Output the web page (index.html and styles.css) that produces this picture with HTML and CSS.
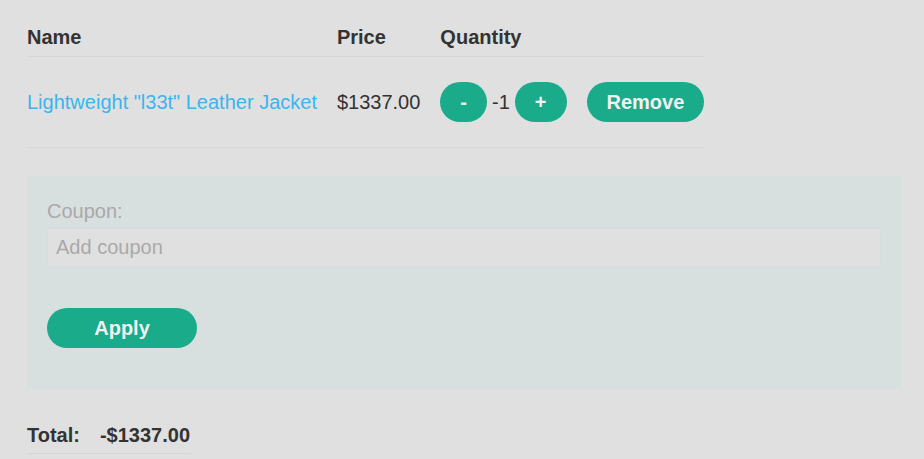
FILE: index.html
```html
<!DOCTYPE html>
<html lang="en">
<head>
<meta charset="utf-8">
<title>Cart</title>
<link rel="stylesheet" href="styles.css">
</head>
<body>
<main class="cart">
  <table class="items">
    <thead>
      <tr>
        <th>Name</th>
        <th>Price</th>
        <th>Quantity</th>
        <th></th>
      </tr>
    </thead>
    <tbody>
      <tr>
        <td><a class="product" href="#">Lightweight "l33t" Leather Jacket</a></td>
        <td>$1337.00</td>
        <td>
          <div class="qty">
            <button class="btn">-</button>
            <span class="qty-value">-1</span>
            <button class="btn">+</button>
          </div>
        </td>
        <td><button class="btn">Remove</button></td>
      </tr>
    </tbody>
  </table>

  <form class="coupon">
    <label class="coupon-label" for="coupon">Coupon:</label>
    <input class="coupon-input" id="coupon" type="text" placeholder="Add coupon">
    <button class="btn btn-apply" type="button">Apply</button>
  </form>

  <table class="totals">
    <tr>
      <td>Total:</td>
      <td>-$1337.00</td>
    </tr>
  </table>
</main>
</body>
</html>
```

FILE: styles.css
```css
html, body {
  margin: 0;
  padding: 0;
  background: #e0e0e0;
}

body {
  font-family: "Liberation Sans", Arial, sans-serif;
  font-size: 20px;
  color: #333;
}

.cart {
  padding: 26px 22px 0 27px;
}

.items {
  border-collapse: collapse;
  border-spacing: 0;
}

.items th {
  text-align: left;
  font-weight: bold;
  padding: 0 20px 7px 0;
  line-height: 23px;
  border-bottom: 1px solid #d6d6d6;
}

.items td {
  padding: 25px 20px 25px 0;
  line-height: 23px;
  vertical-align: middle;
  border-bottom: 1px solid #d6d6d6;
  white-space: nowrap;
}

.items th:last-child,
.items td:last-child {
  padding-right: 0;
}

.product {
  color: #3bb5ef;
  text-decoration: none;
}

.qty {
  display: flex;
  align-items: center;
}

.qty-value {
  margin: 0 5px;
}

.btn {
  height: 40px;
  padding: 0 20px;
  border: none;
  border-radius: 20px;
  background: #1aab8a;
  color: #f2f2f2;
  font-family: "Liberation Sans", Arial, sans-serif;
  font-size: 20px;
  font-weight: bold;
  line-height: 23px;
  cursor: pointer;
}

.coupon {
  margin: 28px 0 0 0;
  padding: 24px 21px 41px 20px;
  background: #d8dfdf;
  display: flex;
  flex-direction: column;
  align-items: flex-start;
}

.coupon-label {
  display: block;
  color: #a9a9a9;
  line-height: 23px;
}

.coupon-input {
  box-sizing: border-box;
  width: 100%;
  height: 39px;
  margin-top: 5px;
  padding: 0 8px;
  border: 1px solid #dadcdc;
  background: #e0e0e0;
  font-family: "Liberation Sans", Arial, sans-serif;
  font-size: 20px;
  color: #333;
  outline: none;
}

.coupon-input::placeholder {
  color: #a9a9a9;
}

.btn-apply {
  width: 150px;
  margin-top: 41px;
}

.totals {
  margin-top: 35px;
  border-collapse: collapse;
  border-spacing: 0;
}

.totals td {
  font-weight: bold;
  line-height: 23px;
  padding: 0 20px 6px 0;
  border-bottom: 1px solid #d6d6d6;
}

.totals td:last-child {
  padding-right: 1px;
}
```
